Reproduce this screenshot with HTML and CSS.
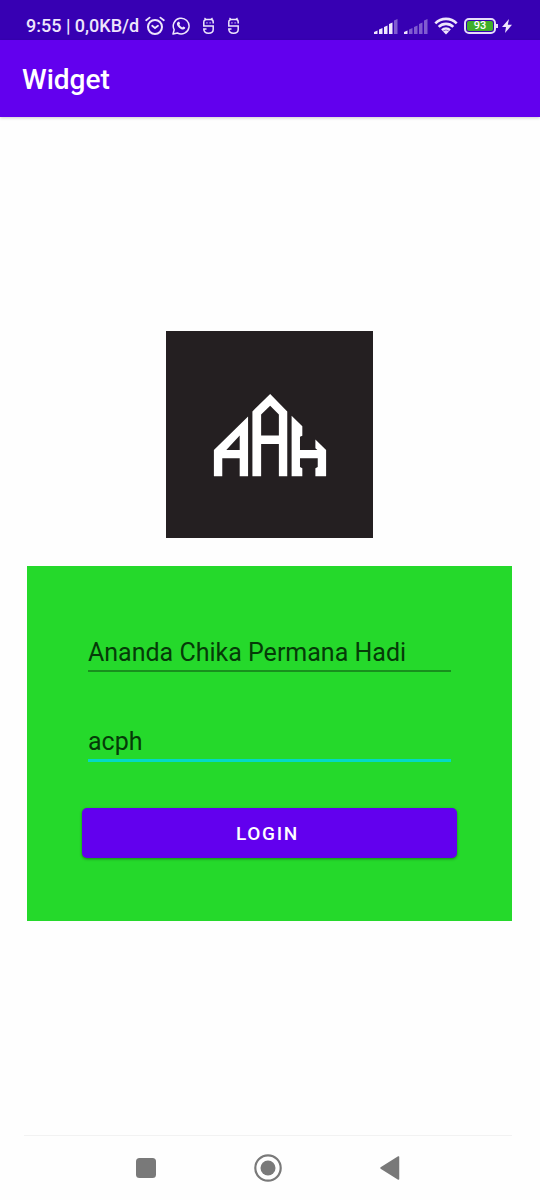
FILE: index.html
```html
<!DOCTYPE html>
<html lang="en">
<head>
<meta charset="utf-8">
<meta name="viewport" content="width=device-width, initial-scale=1">
<title>Widget</title>
<link rel="stylesheet" href="styles.css">
</head>
<body>
<div class="statusbar">
  <span class="status-text">9:55 | 0,0KB/d</span>
  <div class="notifications">
    <svg class="alarm" width="20" height="20" viewBox="0 0 20 20" fill="none" stroke="currentColor" stroke-width="2" stroke-linecap="round" aria-hidden="true"><circle cx="10" cy="11" r="7"/><path d="M1.2 4.2 4.6 1.6M18.8 4.2l-3.4-2.6" stroke-width="1.8"/><path d="m7.2 9.8 2.8 2.2 3-2.2" stroke-width="1.8"/></svg>
    <svg width="18" height="18" viewBox="0 0 18 18" aria-hidden="true"><path d="M1 17l1.2-4.2A7.9 7.9 0 1 1 5.4 16Z" fill="none" stroke="currentColor" stroke-width="1.5" stroke-linejoin="round"/><path d="M6.2 4.8c.5-.3 1-.2 1.2.3l.6 1.4c.1.5-.6 1-.6 1.3.6 1.2 1.5 2 2.8 2.6.4 0 .8-.9 1.2-.8l1.5.7c.5.3.3 1-.1 1.5-1 1-2.4.9-3.9.2-2-1-3.3-2.5-3.9-4.2-.3-1.2.3-2.5 1.2-3Z" fill="currentColor"/></svg>
    <svg width="13" height="18" viewBox="0 0 13 18" fill="none" stroke="currentColor" stroke-width="1.5" aria-hidden="true"><path d="M11.2 6.500V5C11.200 3.300 10.200 2.500 9 2.500H4.500C3 2.500 1.800 3.300 1.800 5V9h9.400v3.500c0 2.300-1.700 3.700-4.700 3.700S1.800 14.800 1.800 12H4.500"/><path d="M2.500 1 4 2.500M10.500 1 9 2.500" stroke-width="1.200"/><path d="M4 5.800h1.800M7.300 5.800h1.800" stroke-width="1.200" opacity=".6"/></svg>
    <svg width="13" height="18" viewBox="0 0 13 18" fill="none" stroke="currentColor" stroke-width="1.5" aria-hidden="true"><path d="M11.2 6.500V5C11.200 3.300 10.200 2.500 9 2.500H4.500C3 2.500 1.800 3.300 1.800 5V9h9.400v3.500c0 2.300-1.700 3.700-4.700 3.700S1.800 14.800 1.800 12H4.500"/><path d="M2.500 1 4 2.500M10.500 1 9 2.500" stroke-width="1.200"/><path d="M4 5.800h1.800M7.300 5.800h1.800" stroke-width="1.200" opacity=".6"/></svg>
  </div>
  <div class="system">
    <svg width="24" height="16" viewBox="0 0 24 16" fill="currentColor" aria-hidden="true"><path d="M0 16v-2l3.500-1.500V16ZM5 16v-4.500L8.500 10v6ZM10 16V9l3.500-1.500V16ZM15 16V6l3.500-1.500V16Z"/><path d="M20 16V2.500L23.500 1v15Z" opacity=".4"/></svg>
    <svg width="24" height="16" viewBox="0 0 24 16" fill="currentColor" aria-hidden="true"><path d="M0 16v-2l3.500-1.500V16Z"/><path d="M5 16v-4.500L8.500 10v6ZM10 16V9l3.500-1.500V16ZM15 16V6l3.500-1.500V16ZM20 16V2.500L23.500 1v15Z" opacity=".4"/></svg>
    <svg width="24" height="18" viewBox="0 0 24 18" fill="none" stroke="currentColor" stroke-width="2.600" aria-hidden="true"><path d="M1.300 6.300a15.200 15.200 0 0 1 21.400 0M4.700 9.900a10.300 10.300 0 0 1 14.600 0M8 13.200a5.700 5.700 0 0 1 8 0"/><path d="m9 14.500 3 3 3-3a4.200 4.200 0 0 0-6 0Z" fill="currentColor" stroke="none"/></svg>
    <div class="battery"><span class="level">93</span></div>
    <svg width="10" height="14" viewBox="0 0 10 14" fill="currentColor" aria-hidden="true"><path d="M7 0 0 8h4L3 14l7-8.200H5.800Z"/></svg>
  </div>
</div>
<header class="appbar"><h1 class="title">Widget</h1></header>
<main class="content">
  <svg class="logo" viewBox="20 18 618 618" role="img" aria-label="AAH">
    <path fill="#241f21" d="M20 18h618v618H20z"/>
    <path fill="#fff" fill-rule="evenodd" d="M163 452V373L265 273V452H240V398H188V452ZM240 330V373H200ZM278 452V258L331 206 382 258V452H357V355H304V452ZM304 330V267L331 241 357 267V330ZM395 452V271L427 302V331L420 334V373H472L466 368V342L498 373V452H466V428L473 424V398H420V424L427 428V452Z"/>
  </svg>
  <form class="card">
    <input class="field" type="text" aria-label="Name" value="Ananda Chika Permana Hadi">
    <input class="field field-active" type="text" aria-label="Username" value="acph">
    <button class="login" type="button">LOGIN</button>
  </form>
</main>
<nav class="navbar" aria-label="System">
  <button class="nav-button" type="button" aria-label="Recent apps"><svg width="28" height="28" viewBox="0 0 28 28"><rect x="4" y="4" width="20" height="20" rx="3.500" fill="#797979"/></svg></button>
  <button class="nav-button" type="button" aria-label="Home"><svg width="28" height="28" viewBox="0 0 28 28"><circle cx="14" cy="14" r="12.700" fill="none" stroke="#797979" stroke-width="2.200"/><circle cx="14" cy="14" r="7.500" fill="#797979"/></svg></button>
  <button class="nav-button" type="button" aria-label="Back"><svg width="28" height="28" viewBox="0 0 28 28"><path d="M5 14 22.500 3V25Z" fill="#797979" stroke="#797979" stroke-width="1.500" stroke-linejoin="round"/></svg></button>
</nav>
</body>
</html>
```
FILE: styles.css
```css
* {
  box-sizing: border-box;
}

body {
  display: flex;
  flex-direction: column;
  min-height: 100vh;
  margin: 0;
  background: #fefefe;
  font-family: Roboto, sans-serif;
}

button {
  border: 0;
  font-family: inherit;
}

.statusbar {
  display: flex;
  align-items: center;
  height: 40px;
  padding: 12px 28px 0 26px;
  background: #3700b3;
  color: #eee6fc;
}

.status-text {
  font-size: 18px;
  font-weight: 500;
  line-height: 28px;
  white-space: nowrap;
}

.notifications {
  display: flex;
  align-items: center;
  gap: 12px;
  margin-left: 6px;
}

.alarm {
  margin-right: -5px;
}

.system {
  display: flex;
  align-items: center;
  gap: 6px;
  margin-left: auto;
}

.battery {
  position: relative;
  width: 32px;
  height: 16px;
  padding: 1px;
  border: 2px solid #e6dcfa;
  border-radius: 5px;
}

.battery::after {
  content: "";
  position: absolute;
  top: 4px;
  right: -4px;
  width: 2px;
  height: 4px;
  background: #e6dcfa;
}

.level {
  display: block;
  border-radius: 2px;
  background: #3fae29;
  color: #fff;
  font-size: 11px;
  font-weight: 500;
  line-height: 10px;
  text-align: center;
}

.appbar {
  display: flex;
  align-items: center;
  height: 77px;
  padding: 2px 22px 0;
  background: #6200ee;
  box-shadow: 0 1px 3px rgba(0, 0, 0, 0.2);
}

.title {
  margin: 0;
  color: #fff;
  font-size: 28px;
  font-weight: 500;
}

.content {
  display: flex;
  flex: 1;
  flex-direction: column;
  align-items: center;
  justify-content: center;
  gap: 28px;
  padding: 0 28px 0 27px;
}

.logo {
  width: 207px;
}

.card {
  display: flex;
  flex-direction: column;
  width: 100%;
  padding: 62px 55px 63px;
  background: #25d92b;
}

.field {
  height: 44px;
  margin: 0 6px 46px;
  padding: 6px 0 0;
  border: 0;
  border-bottom: 2px solid #188f1d;
  border-radius: 0;
  outline: 0;
  background: none;
  color: #053b08;
  font-family: inherit;
  font-size: 25px;
}

.field-active {
  border-bottom: 3px solid #03dac5;
}

.login {
  height: 50px;
  padding: 0 8px 0 4px;
  border-radius: 5px;
  background: #6200ee;
  box-shadow: 0 1px 3px rgba(0, 0, 0, 0.4);
  color: #fff;
  font-size: 19px;
  font-weight: 500;
  letter-spacing: 0.09em;
}

.navbar {
  display: flex;
  justify-content: center;
  height: 65px;
  margin: 0 28px 0 24px;
  border-top: 1px solid #f2f2f2;
}

.nav-button {
  display: flex;
  align-items: center;
  justify-content: center;
  width: 122px;
  padding: 0;
  background: none;
}
```
